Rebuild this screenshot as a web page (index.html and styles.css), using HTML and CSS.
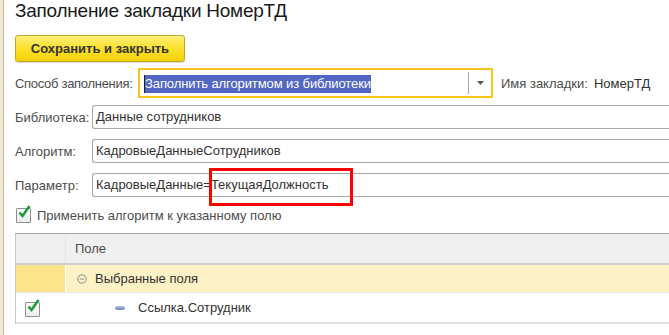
FILE: index.html
```html
<!DOCTYPE html>
<html lang="ru">
<head>
  <meta charset="UTF-8" />
  <title>Заполнение закладки НомерТД</title>
  <link rel="stylesheet" href="styles.css">
</head>
<body>
  <div class="side-strip"></div>

  <div class="form">
    <h1 class="title">Заполнение закладки НомерТД</h1>

    <div class="toolbar">
      <button class="btn-save">Сохранить и закрыть</button>
    </div>

    <!-- Способ заполнения -->
    <div class="row">
      <span class="label label-wide">Способ заполнения:</span>
      <div class="combo">
        <span class="combo-text"><span class="selected">Заполнить алгоритмом из библиотеки</span></span>
        <span class="combo-btn">
          <svg width="7" height="4" viewBox="0 0 7 4"><path d="M0 0h7L3.5 4z" fill="#555"/></svg>
        </span>
      </div>
      <span class="label label-name">Имя закладки:</span>
      <span class="value">НомерТД</span>
    </div>

    <div class="row">
      <span class="label label-fixed">Библиотека:</span>
      <div class="field">Данные сотрудников</div>
    </div>

    <div class="row">
      <span class="label label-fixed">Алгоритм:</span>
      <div class="field">КадровыеДанныеСотрудников</div>
    </div>

    <div class="row">
      <span class="label label-fixed">Параметр:</span>
      <div class="field">КадровыеДанные=<span class="marked">ТекущаяДолжность</span></div>
    </div>

    <label class="check-row">
      <span class="checkbox">
        <svg width="16" height="16" viewBox="0 0 16 16"><path d="M3.5 7.5l3 3.5 7-10" fill="none" stroke="#1c9b3c" stroke-width="2.6"/></svg>
      </span>
      Применить алгоритм к указанному полю
    </label>

    <div class="grid">
      <div class="grid-row grid-head">
        <div class="cell cell-mark"></div>
        <div class="cell">Поле</div>
      </div>
      <div class="grid-row grid-group">
        <div class="cell cell-mark"></div>
        <div class="cell">
          <svg class="collapse" width="10" height="10" viewBox="0 0 10 10"><circle cx="5" cy="5" r="4.2" fill="none" stroke="#8a8a8a"/><path d="M2.8 5h4.4" stroke="#8a8a8a"/></svg>
          Выбранные поля
        </div>
      </div>
      <div class="grid-row grid-item">
        <div class="cell cell-mark">
          <span class="checkbox">
            <svg width="16" height="16" viewBox="0 0 16 16"><path d="M3.5 7.5l3 3.5 7-10" fill="none" stroke="#1c9b3c" stroke-width="2.6"/></svg>
          </span>
        </div>
        <div class="cell cell-item">
          <span class="item-icon"></span>
          Ссылка.Сотрудник
        </div>
      </div>
    </div>
  </div>
</body>
</html>
```

FILE: styles.css
```css
html, body {
  margin: 0;
  height: 100%;
  overflow: hidden;
}
body {
  display: flex;
  background: #fff;
  font-family: "Liberation Sans", Arial, sans-serif;
  font-size: 13px;
  color: #333;
}
.side-strip {
  width: 3px;
  flex: none;
  background: #f1eacb;
  border-right: 1px solid #b4b4b4;
}
.form {
  flex: none;
  width: 700px;
  padding-left: 11px;
}
.title {
  margin: 0;
  height: 33px;
  line-height: 22px;
  font-size: 19px;
  letter-spacing: -0.25px;
  font-weight: normal;
  color: #1a1a1a;
}
.toolbar {
  height: 33px;
  padding-top: 2px;
  box-sizing: border-box;
}
.btn-save {
  width: 170px;
  height: 27px;
  padding: 0;
  font-family: "Liberation Sans", Arial, sans-serif;
  font-size: 13px;
  font-weight: bold;
  color: #333;
  background: linear-gradient(#fff07a, #fbe232 45%, #f3d200);
  border: 1px solid #bfa52a;
  border-radius: 3px;
  box-shadow: 0 1px 1px rgba(0, 0, 0, 0.15);
  cursor: pointer;
}
.row {
  display: flex;
  align-items: center;
  height: 34px;
}
.label {
  color: #4d4d4d;
  white-space: nowrap;
}
.label-wide {
  width: 123px;
  flex: none;
  letter-spacing: -0.3px;
}
.label-fixed {
  width: 77px;
  flex: none;
}
.combo {
  display: flex;
  align-items: center;
  width: 355px;
  height: 30px;
  box-sizing: border-box;
  border: 2px solid #f6c518;
}
.combo-text {
  flex: 1;
  padding-left: 4px;
  letter-spacing: -0.1px;
}
.selected {
  background: #5267c4;
  color: #fff;
  border-left: 1px solid #222;
  padding: 1px 0 2px;
}
.combo-btn {
  display: flex;
  align-items: center;
  justify-content: center;
  width: 22px;
  height: 22px;
  border-left: 1px solid #a8a8a8;
}
.label-name {
  margin-left: 8px;
}
.value {
  margin-left: 6px;
  color: #333;
}
.field {
  flex: 1;
  height: 24px;
  line-height: 22px;
  box-sizing: border-box;
  padding-left: 3px;
  border: 1px solid #a6a6a6;
  border-right: none;
  border-radius: 3px 0 0 3px;
  color: #333;
}
.marked {
  position: relative;
}
.marked::after {
  content: "";
  position: absolute;
  left: -2px;
  top: -9px;
  width: 138px;
  height: 32px;
  border: 3px solid #ff0000;
}
.check-row {
  display: flex;
  align-items: center;
  gap: 6px;
  height: 22px;
  margin-top: 2px;
  padding-left: 1px;
  color: #4d4d4d;
}
.checkbox {
  position: relative;
  display: inline-block;
  width: 13px;
  height: 13px;
  border: 1px solid #8f8f8f;
  border-radius: 1px;
  background: linear-gradient(#fff, #ececec);
}
.checkbox svg {
  position: absolute;
  left: -1px;
  top: -4px;
}
.grid {
  margin-top: 7px;
  border-left: 1px solid #c8c8c8;
  border-top: 1px solid #a8a8a8;
}
.grid-row {
  display: flex;
  border-bottom: 1px solid #dadada;
}
.cell {
  display: flex;
  align-items: center;
  flex: 1;
  padding-left: 9px;
}
.cell-mark {
  flex: none;
  width: 49px;
  padding-left: 0;
  border-right: 1px solid #e4e4e4;
  justify-content: center;
}
.grid-head {
  height: 29px;
  background: #f0f0f0;
  color: #4d4d4d;
  border-bottom: 2px solid #d0d0d0;
}
.grid-group {
  height: 27px;
  background: #fdf1c6;
  color: #333;
  border-bottom: 1px solid #e6e6e6;
}
.grid-group .cell-mark {
  background: #fde38c;
  border-right: 1px solid #fff;
}
.collapse {
  margin-left: 2px;
  margin-right: 8px;
}
.grid-item {
  height: 29px;
  border-bottom: 2px solid #e2e2e2;
}
.grid-item .cell-mark {
  border-right: none;
  justify-content: flex-start;
  padding-left: 9px;
  padding-top: 3px;
  box-sizing: border-box;
}
.cell-item {
  padding-left: 50px;
}
.item-icon {
  display: inline-block;
  width: 10px;
  height: 4px;
  margin-right: 13px;
  border-radius: 2px;
  background: linear-gradient(#a9c1db, #6d8db5);
}
```
